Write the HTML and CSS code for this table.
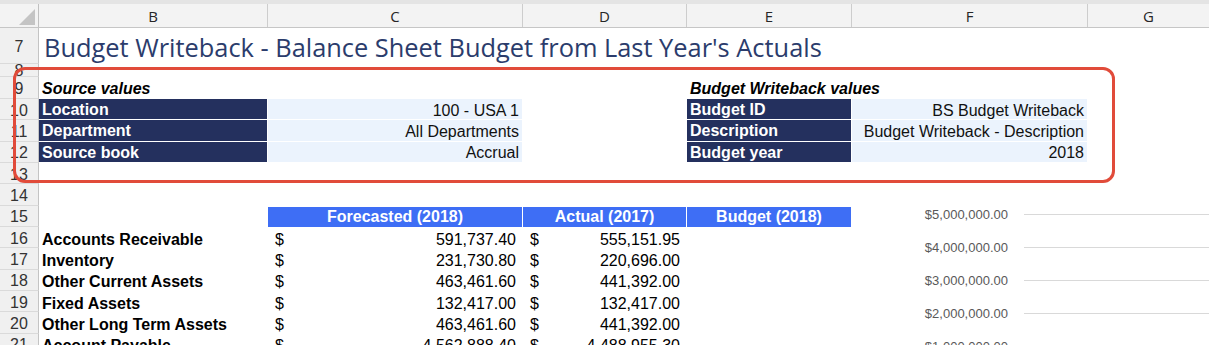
FILE: index.html
```html
<!DOCTYPE html>
<html>
<head>
<meta charset="utf-8">
<link rel="stylesheet" href="styles.css">
</head>
<body>
<div class="cols colhead">
  <div class="corner"><svg width="38" height="23" viewBox="0 0 38 23"><polygon points="35,5 35,21 19,21" fill="#c4c4c4"/></svg></div>
  <div>B</div><div>C</div><div>D</div><div>E</div><div>F</div><div class="last">G</div>
</div>
<div class="cols sheet">
  <div class="rh">7</div><div class="title">Budget Writeback - Balance Sheet Budget from Last Year's Actuals</div>
  <div class="rh r8">8</div><div class="span"></div>
  <div class="rh">9</div><div class="c bi">Source values</div><div></div><div></div><div class="c bi">Budget Writeback values</div><div></div><div></div>
  <div class="rh">10</div><div class="c navy">Location</div><div class="c val">100 - USA 1</div><div></div><div class="c navy">Budget ID</div><div class="c val">BS Budget Writeback</div><div></div>
  <div class="rh">11</div><div class="c navy">Department</div><div class="c val">All Departments</div><div></div><div class="c navy">Description</div><div class="c val">Budget Writeback - Description</div><div></div>
  <div class="rh">12</div><div class="c navy">Source book</div><div class="c val">Accrual</div><div></div><div class="c navy">Budget year</div><div class="c val">2018</div><div></div>
  <div class="rh">13</div><div class="span"></div>
  <div class="rh">14</div><div class="span"></div>
  <div class="rh">15</div><div></div><div class="c hdr">Forecasted (2018)</div><div class="c hdr">Actual (2017)</div><div class="c hdr">Budget (2018)</div><div></div><div></div>
  <div class="rh">16</div><div class="c lbl">Accounts Receivable</div><div class="c acct"><span>$</span><span>591,737.40</span></div><div class="c acct"><span>$</span><span>555,151.95</span></div><div></div><div></div><div></div>
  <div class="rh">17</div><div class="c lbl">Inventory</div><div class="c acct"><span>$</span><span>231,730.80</span></div><div class="c acct"><span>$</span><span>220,696.00</span></div><div></div><div></div><div></div>
  <div class="rh">18</div><div class="c lbl">Other Current Assets</div><div class="c acct"><span>$</span><span>463,461.60</span></div><div class="c acct"><span>$</span><span>441,392.00</span></div><div></div><div></div><div></div>
  <div class="rh">19</div><div class="c lbl">Fixed Assets</div><div class="c acct"><span>$</span><span>132,417.00</span></div><div class="c acct"><span>$</span><span>132,417.00</span></div><div></div><div></div><div></div>
  <div class="rh">20</div><div class="c lbl">Other Long Term Assets</div><div class="c acct"><span>$</span><span>463,461.60</span></div><div class="c acct"><span>$</span><span>441,392.00</span></div><div></div><div></div><div></div>
  <div class="rh">21</div><div class="c lbl">Account Payable</div><div class="c acct"><span>$</span><span>4,562,888.40</span></div><div class="c acct"><span>$</span><span>4,488,955.30</span></div><div></div><div></div><div></div>
</div>

<div class="callout"></div>

<div class="chart">
  <div class="tick"><span class="lab">$5,000,000.00</span><span class="line"></span></div>
  <div class="tick"><span class="lab">$4,000,000.00</span><span class="line"></span></div>
  <div class="tick"><span class="lab">$3,000,000.00</span><span class="line"></span></div>
  <div class="tick"><span class="lab">$2,000,000.00</span><span class="line"></span></div>
  <div class="tick"><span class="lab">$1,000,000.00</span><span class="line"></span></div>
</div>
</body>
</html>
```
FILE: styles.css
```css
* { box-sizing: border-box; margin: 0; padding: 0; }
html, body { width: 1209px; height: 345px; overflow: hidden; background: #fff; }
body { position: relative; font-family: "Liberation Sans", Arial, sans-serif; font-size: 16px; color: #000; }

.cols { display: grid; grid-template-columns: 39px 229px 255px 164px 165px 236px 1fr; }

.colhead { height: 28px; background: #f3f3f3; border-top: 4px solid #e4e4e4; border-bottom: 1px solid #c6c6c6; }
.colhead > div { border-right: 1px solid #cdcdcd; display: flex; align-items: center; justify-content: center; font-family: "Open Sans", sans-serif; font-size: 15px; color: #262626; }
.colhead > div.last { border-right: none; }
.colhead .corner { border-right: 1px solid #c0c0c0; }

.sheet { grid-template-rows: 36px 13px 22px repeat(12, 21.33px); }
.rh { background: #f0f0f0; border-right: 1px solid #c4c4c4; border-bottom: 1px solid #dadada; display: flex; align-items: center; justify-content: center; font-size: 16px; color: #333; overflow: hidden; padding-top: 3px; }
.rh.r8 { align-items: flex-start; padding-top: 0; line-height: 14px; }
.span { grid-column: 2 / -1; }
.title { grid-column: 2 / -1; display: flex; align-items: center; padding-left: 5px; padding-top: 2px; font-family: "Open Sans", sans-serif; font-size: 25.4px; color: #2b3c6c; white-space: nowrap; }

.c { display: flex; align-items: center; padding: 1px 3px 0; white-space: nowrap; overflow: visible; }
.bi { font-weight: bold; font-style: italic; }
.navy { background: #24305e; color: #fff; font-weight: bold; border-right: 1px solid #fff; border-bottom: 1px solid #fff; padding-top: 2px; }
.val { background: #ebf3fd; justify-content: flex-end; border-right: 1px solid #fff; border-bottom: 1px solid #fff; color: #111; padding-top: 3px; }
.hdr { background: #3e6ef5; color: #fff; font-weight: bold; font-size: 16px; justify-content: center; border-right: 1px solid #fff; border-top: 1px solid #fff; }
.lbl { font-weight: bold; padding-top: 4px; }
.acct { justify-content: space-between; padding: 4px 7px 0; }

.callout { position: absolute; left: 13px; top: 67px; width: 1102px; height: 116px; border: 3px solid #e14b3a; border-radius: 12px; }

.chart { position: absolute; left: 900px; top: 198px; width: 320px; display: flex; flex-direction: column; background: #fff; }
.tick { height: 33px; display: flex; align-items: center; }
.lab { width: 108px; text-align: right; font-size: 13px; color: #595959; }
.line { flex: 1; margin-left: 16px; height: 1px; background: #d9d9d9; }
```
